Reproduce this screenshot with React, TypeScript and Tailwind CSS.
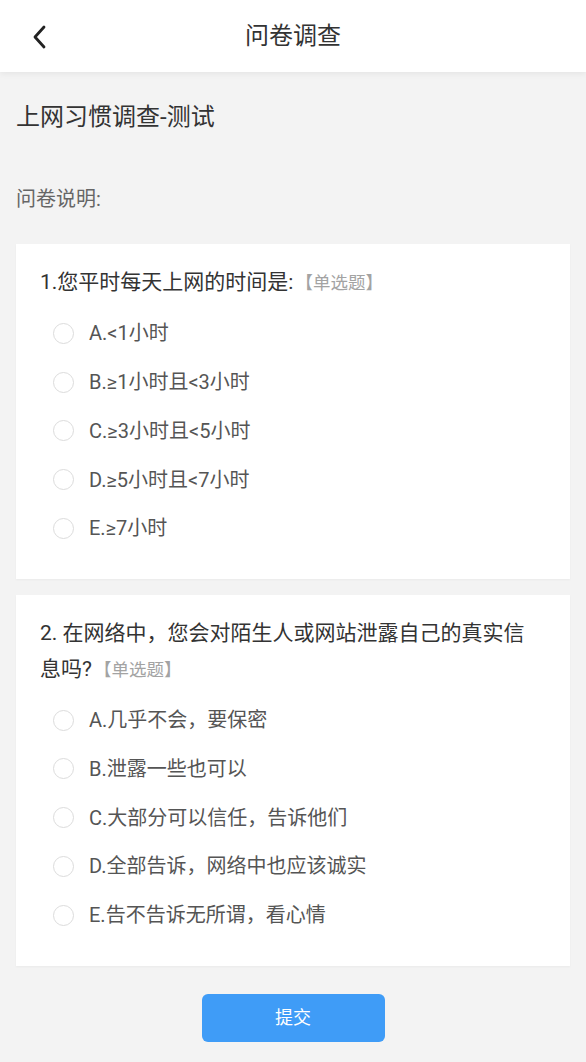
const font = { fontFamily: 'Roboto, "Noto Sans CJK SC", "Noto Sans", sans-serif' }

interface Question {
  title: string
  options: string[]
}

const questions: Question[] = [
  {
    title: "1.您平时每天上网的时间是:",
    options: ["A.<1小时", "B.≥1小时且<3小时", "C.≥3小时且<5小时", "D.≥5小时且<7小时", "E.≥7小时"],
  },
  {
    title: "2. 在网络中，您会对陌生人或网站泄露自己的真实信息吗?",
    options: [
      "A.几乎不会，要保密",
      "B.泄露一些也可以",
      "C.大部分可以信任，告诉他们",
      "D.全部告诉，网络中也应该诚实",
      "E.告不告诉无所谓，看心情",
    ],
  },
]

function Radio() {
  return <span className="w-[21px] h-[21px] rounded-full border border-[#dcdcdc] bg-white shrink-0" />
}

function QuestionCard({ q }: { q: Question }) {
  return (
    <div className="mx-4 bg-white pl-6 pr-[36px] pt-[20px] pb-[26px] shadow-[0_1px_2px_rgba(0,0,0,0.04)]">
      {/* Question */}
      <p className="text-[21px] leading-[36px] text-[#333]">
        {q.title}
        <span className="ml-[2px] text-[17.5px] text-[#a3a3a3]">【单选题】</span>
      </p>

      {/* Options */}
      <div className="mt-[8px]">
        {q.options.map((opt) => (
          <label key={opt} className="flex items-center h-[48.75px] pl-[13px] gap-[15px]">
            <Radio />
            <span className="text-[20px] text-[#555]">{opt}</span>
          </label>
        ))}
      </div>
    </div>
  )
}

export default function App() {
  return (
    <div className="min-h-screen bg-[#f3f3f3]" style={font}>
      {/* Header */}
      <header className="relative h-[72px] bg-white flex items-center justify-center shadow-[0_2px_6px_rgba(0,0,0,0.06)]">
        <button className="absolute left-[27px] top-[20px] p-1">
          <svg width="18" height="26" viewBox="0 0 18 26" fill="none">
            <polyline
              points="13,3 4,13 13,23"
              stroke="#222"
              strokeWidth="2.8"
              strokeLinecap="round"
              strokeLinejoin="round"
            />
          </svg>
        </button>
        <h1 className="text-[24px] text-[#333]">问卷调查</h1>
      </header>

      {/* Intro */}
      <div className="px-4 pt-[29px]">
        <h2 className="text-[24px] leading-[32px] text-[#333]">上网习惯调查-测试</h2>
        <p className="mt-[52px] text-[20px] leading-[28px] text-[#666]">问卷说明:</p>
      </div>

      {/* Questions */}
      <div className="mt-[31px] flex flex-col gap-4">
        {questions.map((q) => (
          <QuestionCard key={q.title} q={q} />
        ))}
      </div>

      {/* Submit */}
      <div className="flex justify-center pt-[28px] pb-5">
        <button className="w-[183px] h-[48px] rounded-[6px] bg-[#3f9cf7] text-white text-[18px]">提交</button>
      </div>
    </div>
  )
}
